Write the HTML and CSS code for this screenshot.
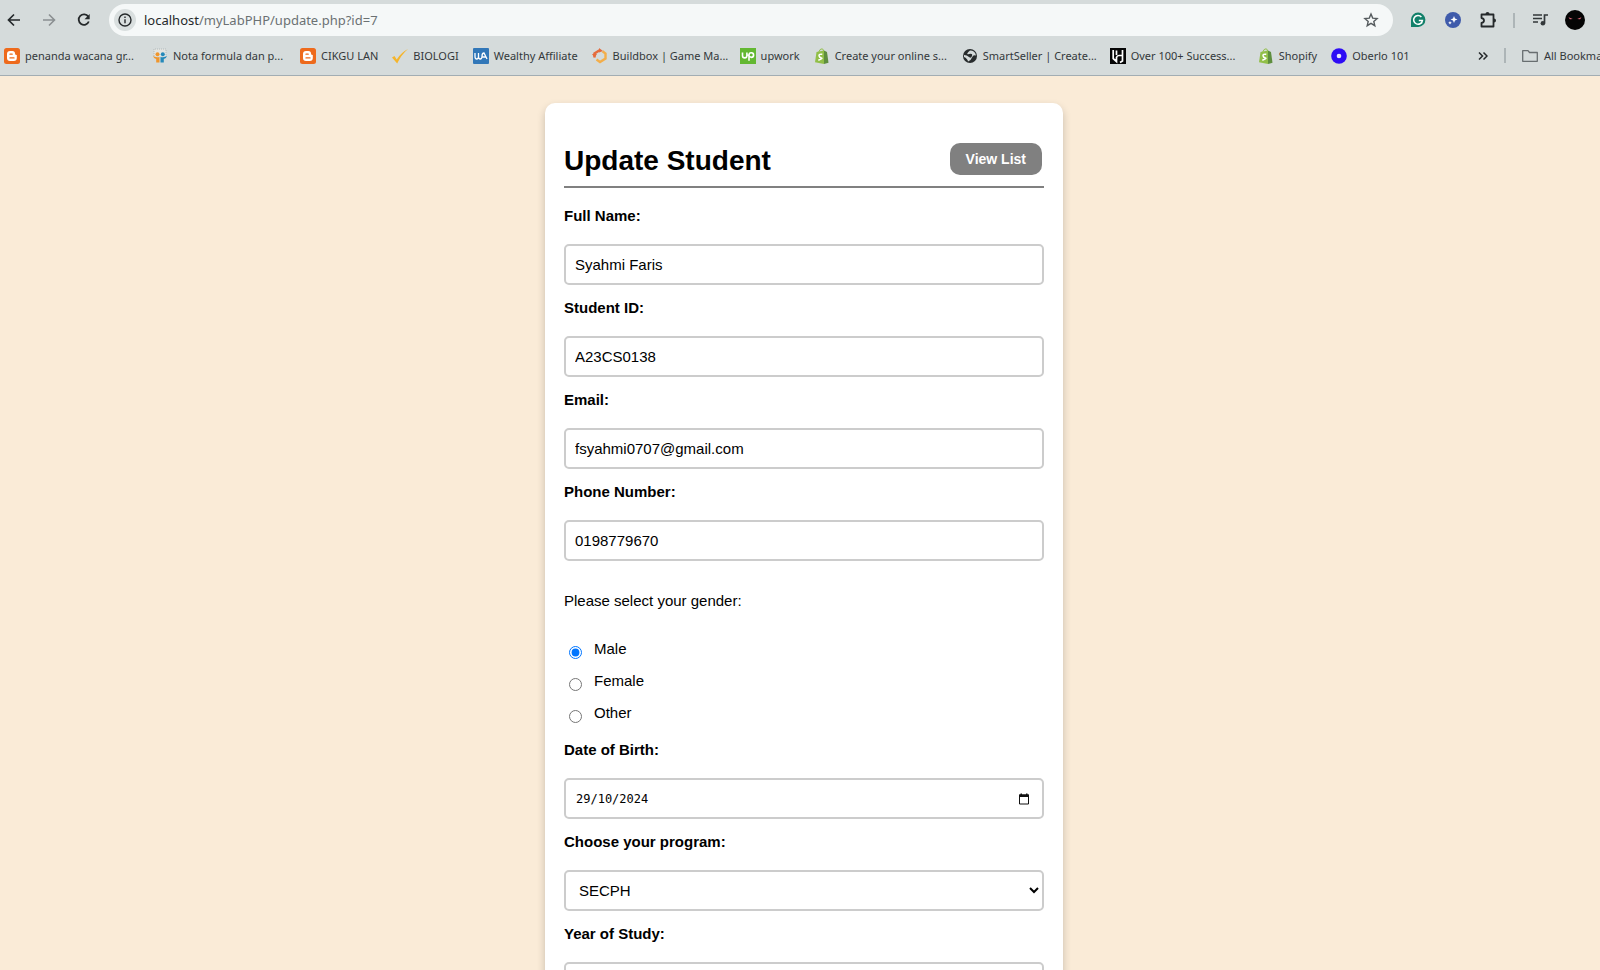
FILE: index.html
```html
<!DOCTYPE html>
<html lang="en">
<head>
<meta charset="utf-8">
<title>Update Student</title>
<link rel="stylesheet" href="styles.css">
</head>
<body>
<header class="chrome">
  <div class="toolbar">
    <button class="tool" type="button" aria-label="Back"><svg viewBox="0 0 20 20"><path d="M16 10H5M10 4.500L4.500 10L10 15.500" fill="none" stroke="#25292b" stroke-width="1.700"/></svg></button>
    <button class="tool" type="button" aria-label="Forward"><svg viewBox="0 0 20 20"><path d="M4 10H15M10 4.500L15.500 10L10 15.500" fill="none" stroke="#8b9092" stroke-width="1.600"/></svg></button>
    <button class="tool" type="button" aria-label="Reload"><svg viewBox="0 0 20 20"><path d="M14.300 6.800A5.200 5.200 0 1 0 14.800 11.500" fill="none" stroke="#25292b" stroke-width="1.800"/><path d="M15.700 4v5.200h-5.200z" fill="#25292b"/></svg></button>
    <div class="omnibox">
      <button class="site-info" type="button" aria-label="Site information"><svg viewBox="0 0 16 16"><circle cx="8" cy="8" r="6" fill="none" stroke="#25292b" stroke-width="1.400"/><path d="M8 7.200v4M8 4.600v1.500" stroke="#25292b" stroke-width="1.400"/></svg></button>
      <div class="url"><span class="host">localhost</span>/myLabPHP/update.php?id=7</div>
      <button class="tool" type="button" aria-label="Bookmark this page"><svg viewBox="0 0 20 20"><path d="M10 4l1.700 4.100 4.400.4-3.300 2.900 1 4.300-3.800-2.300-3.800 2.300 1-4.300-3.300-2.900 4.400-.4z" fill="none" stroke="#555b5e" stroke-width="1.400"/></svg></button>
    </div>
    <button class="tool" type="button" aria-label="Grammar checker"><svg viewBox="0 0 20 20"><path d="M3 17V10a7.200 7.200 0 1 1 7.200 7z" fill="#12806a"/><path d="M13.400 7A4.400 4.400 0 1 0 14.400 10.600H10.800M14.400 10.600l-1 3" fill="none" stroke="#fff" stroke-width="1.500"/></svg></button>
    <button class="tool" type="button" aria-label="Sparkle extension"><svg viewBox="0 0 20 20"><circle cx="10" cy="10" r="8" fill="#3f5bab"/><path d="M11 6l1 2.500 2.500 1-2.500 1L11 13l-1-2.500-2.500-1 2.500-1zM7 11l.6 1.200 1.200.6-1.200.6L7 14.600l-.6-1.200-1.200-.6 1.200-.6z" fill="#fff"/></svg></button>
    <button class="tool" type="button" aria-label="Extensions"><svg viewBox="0 0 20 20"><path d="M3.500 4.500H15.500V16.500H3.500V13Q6 12.500 6 10.500T3.500 8z" fill="none" stroke="#25292b" stroke-width="1.800" stroke-linejoin="round"/><path d="M7.500 4a2 2 0 0 1 4 0zM16 8.500a2 2 0 0 1 0 4z" fill="#25292b"/></svg></button>
    <span class="divider"></span>
    <button class="tool" type="button" aria-label="Media controls"><svg viewBox="0 0 20 20"><path d="M3 5h9M3 8.500h9M3 12h5M14.500 13V5H18" fill="none" stroke="#33383a" stroke-width="1.700"/><circle cx="12.900" cy="13.200" r="2.300" fill="#33383a"/></svg></button>
    <button class="tool" type="button" aria-label="Profile"><svg viewBox="0 0 20 20"><circle cx="10" cy="10" r="10" fill="#050505"/><path d="M3.500 7.200l4.300 1.900-2.900.1zM16.500 7.200l-4.300 1.900 2.900.1z" fill="#e66b7c"/></svg></button>
  </div>
  <nav class="bookmarks">
    <a class="bookmark long" href="#"><svg viewBox="0 0 16 16"><rect width="16" height="16" rx="2.500" fill="#ee6a1c"/><path d="M6 3h2.500a2.500 2.500 0 0 1 2.500 2.500Q11 7 12.800 7v3a3 3 0 0 1-3 3H6a3 3 0 0 1-3-3V6a3 3 0 0 1 3-3z" fill="#fff"/><path d="M6 6.200h2.200M6 9.900h4" stroke="#ee6a1c" stroke-width="1.300" stroke-linecap="round"/></svg>penanda wacana gr...</a>
    <a class="bookmark long" href="#"><svg viewBox="0 0 16 16"><path d="M2 8V1h12v7" fill="#e3e4e1" stroke="#aab1b2" stroke-width=".8" stroke-dasharray="1 1"/><circle cx="5.500" cy="6.300" r="2" fill="#ef962d"/><circle cx="10.800" cy="6.300" r="2" fill="#2589ba"/><path d="M1 7.800q2 2 6.500 1.200v5.500H4.200V11Q1.500 10.500 1 7.800z" fill="#ef962d"/><path d="M15 7.800q-2 2-6.500 1.200v5.500h3.300V11Q14.500 10.500 15 7.800z" fill="#2589ba"/></svg>Nota formula dan p...</a>
    <a class="bookmark" href="#"><svg viewBox="0 0 16 16"><rect width="16" height="16" rx="2.500" fill="#ee6a1c"/><path d="M6 3h2.500a2.500 2.500 0 0 1 2.500 2.500Q11 7 12.800 7v3a3 3 0 0 1-3 3H6a3 3 0 0 1-3-3V6a3 3 0 0 1 3-3z" fill="#fff"/><path d="M6 6.200h2.200M6 9.900h4" stroke="#ee6a1c" stroke-width="1.300" stroke-linecap="round"/></svg>CIKGU LAN</a>
    <a class="bookmark" href="#"><svg viewBox="0 0 16 16"><path d="M0 9.500L2.500 8l2.200 3.500Q9 4.500 16 1 9 7 5.200 15.500z" fill="#f5b52c"/></svg>BIOLOGI</a>
    <a class="bookmark" href="#"><svg viewBox="0 0 16 16"><rect width="16" height="16" rx="1" fill="#3177b8"/><path d="M2 5v3.500Q2 11 3.700 11T5.500 8.500V5v3.500Q5.500 11 7.200 11T9 8.500Q9 5 11 5L14 11M9.500 9h3.500" fill="none" stroke="#fff" stroke-width="1.300"/></svg>Wealthy Affiliate</a>
    <a class="bookmark long" href="#"><svg viewBox="0 0 16 16"><path d="M2.500 9.500V5.500L8 2" fill="none" stroke="#e56b3c" stroke-width="2.500"/><path d="M0 6h5L2.500 9.500zM7 0v4.500L11 3z" fill="#e56b3c"/><path d="M10.500 3.200L13.500 5.500v5L8 14 4.500 11.600" fill="none" stroke="#f3ae4a" stroke-width="2.400"/></svg>Buildbox | Game Ma...</a>
    <a class="bookmark" href="#"><svg viewBox="0 0 16 16"><rect width="16" height="16" fill="#63b832"/><path d="M2.500 4.500v3.200a2.200 2.200 0 0 0 4.400 0V4.500M9 12.800V7a2.300 2.300 0 1 1 2.300 2.400Q9.500 9.400 8 6.500" fill="none" stroke="#fff" stroke-width="1.600"/></svg>upwork</a>
    <a class="bookmark long" href="#"><svg viewBox="0 0 16 16"><path d="M2.500 4L10 2.500V16L1 14.300z" fill="#91bf48"/><path d="M10 2.500L13 4l1.500 10.800L10 16z" fill="#5e8e3e"/><path d="M4.500 4.500Q6 .5 8 .8T9.500 4" fill="none" stroke="#91bf48"/><path d="M8.300 6.200Q4.800 5.800 5 7.700T7.300 10 4.300 12.200" fill="none" stroke="#fff" stroke-width="1.500"/></svg>Create your online s...</a>
    <a class="bookmark long" href="#"><svg viewBox="0 0 16 16"><circle cx="8" cy="8" r="7" fill="#282c2d"/><path d="M2 7q3 0 5 2t3-1-3-2 1-3.500q5 0 6 5-3-1-4 2t-4 4Q5.500 10.500 2 9z" fill="#d5dbdb"/></svg>SmartSeller | Create...</a>
    <a class="bookmark long" href="#"><svg viewBox="0 0 16 16"><rect width="16" height="16" fill="#060606"/><path d="M3.200 2v8.500L6.500 13.500V9.500Q7 7.500 9 7.500H12.500V13L10 14.500M6.500 2.500V7M12.500 2V7.500" fill="none" stroke="#fff" stroke-width="1.700"/></svg>Over 100+ Success...</a>
    <a class="bookmark" href="#"><svg viewBox="0 0 16 16"><path d="M2.500 4L10 2.500V16L1 14.300z" fill="#91bf48"/><path d="M10 2.500L13 4l1.500 10.800L10 16z" fill="#5e8e3e"/><path d="M4.500 4.500Q6 .5 8 .8T9.500 4" fill="none" stroke="#91bf48"/><path d="M8.300 6.200Q4.800 5.800 5 7.700T7.300 10 4.300 12.200" fill="none" stroke="#fff" stroke-width="1.500"/></svg>Shopify</a>
    <a class="bookmark" href="#"><svg viewBox="0 0 16 16"><circle cx="8" cy="8" r="7.800" fill="#2d0cf5"/><circle cx="8" cy="8" r="2.300" fill="#e9e6ff"/></svg>Oberlo 101</a>
    <div class="bookmarks-end">
      <button class="more" type="button" aria-label="More bookmarks"><svg viewBox="0 0 10 10"><path d="M1 1.500L4.500 5 1 8.500M5.500 1.500L9 5 5.500 8.500" fill="none" stroke="#25292b" stroke-width="1.500"/></svg></button>
      <span class="divider"></span>
      <a class="bookmark all" href="#"><svg viewBox="0 0 16 16"><path d="M.7 13.300V2.700H6l1.500 1.800h7.800v8.800z" fill="none" stroke="#686e70" stroke-width="1.300" stroke-linejoin="round"/></svg>All Bookmarks</a>
    </div>
  </nav>
</header>
<main class="page">
  <form class="card">
    <div class="card-head">
      <h1>Update Student</h1>
      <button class="view-list" type="button">View List</button>
    </div>
    <label for="name">Full Name:</label>
    <input class="field" id="name" type="text" value="Syahmi Faris">
    <label for="sid">Student ID:</label>
    <input class="field" id="sid" type="text" value="A23CS0138">
    <label for="email">Email:</label>
    <input class="field" id="email" type="email" value="fsyahmi0707@gmail.com">
    <label for="phone">Phone Number:</label>
    <input class="field" id="phone" type="tel" value="0198779670">
    <p class="prompt" id="gender-prompt">Please select your gender:</p>
    <div class="choices" role="radiogroup" aria-labelledby="gender-prompt">
      <div class="choice"><input type="radio" name="gender" id="male" checked><label for="male">Male</label></div>
      <div class="choice"><input type="radio" name="gender" id="female"><label for="female">Female</label></div>
      <div class="choice"><input type="radio" name="gender" id="other"><label for="other">Other</label></div>
    </div>
    <label for="dob">Date of Birth:</label>
    <div class="field date">
      <input id="dob" type="text" inputmode="numeric" value="29/10/2024">
      <button type="button" aria-label="Open calendar"><svg viewBox="0 0 12 12"><path d="M1.500 2h9v9h-9z" fill="none" stroke="#111"/><path d="M1 1.500h10V4H1zM2.500.5h1.500v2H2.500zM8 .5h1.500v2H8z" fill="#111"/></svg></button>
    </div>
    <label for="program">Choose your program:</label>
    <select class="field" id="program"><option>SECPH</option></select>
    <label for="year">Year of Study:</label>
    <input class="field" id="year" type="text">
  </form>
</main>
</body>
</html>
```
FILE: styles.css
```css
* { box-sizing: border-box; }

body {
  margin: 0;
  height: 100vh;
  display: flex;
  flex-direction: column;
  overflow: hidden;
  background: #faebd7;
  color: #000;
  font-family: "Liberation Sans", Arial, sans-serif;
  font-size: 15px;
}

button { border: 0; padding: 0; background: none; font: inherit; cursor: pointer; }
svg { display: block; flex: none; }

.chrome {
  flex: none;
  background: #d5dbdb;
  border-bottom: 1px solid #a2adb3;
  font-family: "Noto Sans", "Open Sans", sans-serif;
  overflow: hidden;
}

.toolbar {
  height: 40px;
  display: flex;
  align-items: center;
  gap: 15px;
  padding: 0 15px 0 4px;
}
.tool { flex: none; width: 20px; height: 20px; }

.omnibox {
  flex: 1;
  height: 32px;
  display: flex;
  align-items: center;
  gap: 8px;
  padding: 0 12px 0 5px;
  border-radius: 16px;
  background: #f5f8f8;
}
.site-info {
  width: 22px;
  height: 22px;
  padding: 3px;
  border-radius: 50%;
  background: #d9dfdf;
}
.url { flex: 1; font-size: 13px; color: #6b7173; }
.host { color: #25292b; }
.divider { flex: none; width: 2px; height: 15px; background: #adb5b7; }

.bookmarks {
  display: flex;
  align-items: center;
  height: 35px;
  padding: 0 0 4px 4px;
}
.bookmark {
  flex: none;
  display: flex;
  align-items: center;
  gap: 5px;
  padding-right: 14px;
  color: #33383a;
  font-size: 11px;
  white-space: nowrap;
  text-decoration: none;
}
.bookmark svg { width: 16px; height: 16px; }
.bookmark.long { width: 148px; padding-right: 0; }
.bookmark.all { padding-right: 0; gap: 6px; }
.bookmarks-end {
  flex: 1;
  display: flex;
  align-items: center;
  justify-content: flex-end;
  gap: 16px;
  min-width: 0;
  margin-right: -18px;
}
.more { width: 10px; height: 10px; }

.page {
  flex: 1;
  min-height: 0;
  overflow-y: auto;
  scrollbar-width: none;
  padding: 27px 0 0 8px;
}
.card {
  display: flex;
  flex-direction: column;
  max-width: 518px;
  margin: 0 auto;
  padding: 40px 19px;
  border-radius: 10px;
  background: #fff;
  box-shadow: 0 4px 8px rgba(0, 0, 0, 0.2);
}
.card-head {
  display: flex;
  justify-content: space-between;
  align-items: flex-start;
  padding: 0 2px 7px 0;
  margin-bottom: 18px;
  border-bottom: 2px solid #808080;
}
h1 { margin: 0; font-size: 28px; line-height: 36px; }
.view-list {
  padding: 0 16px;
  border-radius: 10px;
  background: #808080;
  color: #fff;
  font-size: 14px;
  font-weight: bold;
  line-height: 32px;
}

.card > label { font-weight: bold; line-height: 20px; }
.field {
  width: 100%;
  height: 41px;
  margin: 18px 0 13px;
  padding: 0 9px;
  border: 2px solid #ccc;
  border-radius: 5px;
  background: #fff;
  color: #000;
  font: inherit;
}
.prompt { margin: 17px 0 21px; line-height: 20px; }
.choices { margin-bottom: 12px; }
.choice { display: flex; align-items: center; height: 32px; gap: 12px; }
.choice input { width: 13px; height: 13px; margin: 8px 0 0 5px; }

.date { display: flex; align-items: center; justify-content: space-between; padding: 0 12px 0 10px; }
.date input {
  flex: 1;
  min-width: 0;
  border: 0;
  padding: 0;
  outline: 0;
  font: 12px "DejaVu Sans Mono", monospace;
}
.date button { width: 12px; height: 12px; }
```
